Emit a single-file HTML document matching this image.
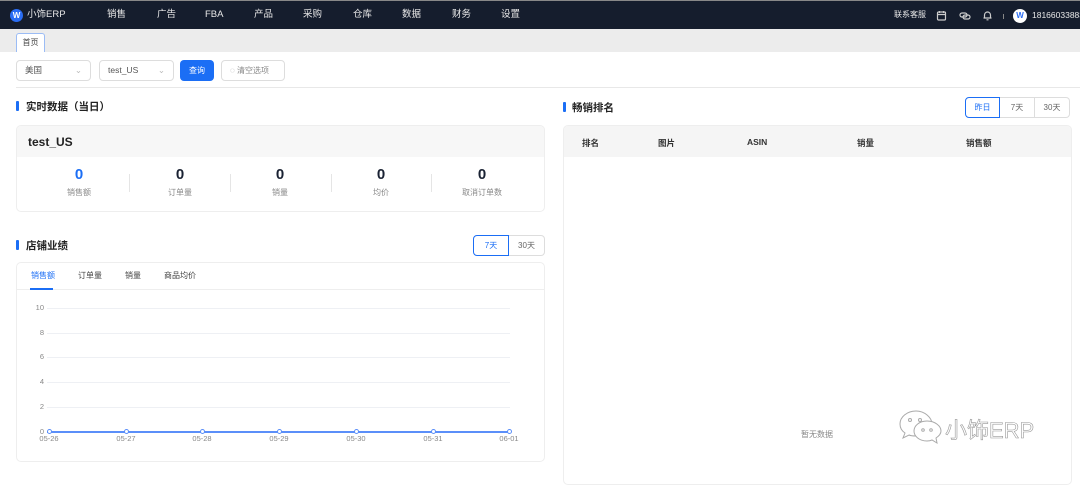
<!DOCTYPE html>
<html><head><meta charset="utf-8"><style>
*{box-sizing:border-box;margin:0;padding:0}
body{width:1080px;height:475px;overflow:hidden;background:#fff;font-family:"Liberation Sans","Noto Sans CJK SC",sans-serif;font-size:9px;color:#333;position:relative}
.abs{position:absolute}
.nav{left:0;top:0;width:1080px;height:29px;background:#151d2d;border-top:1px solid #888}
.nav span{position:absolute;top:0;line-height:28px;color:#e8e8e8;font-size:9.5px}
.tabs{left:0;top:29px;width:1080px;height:23px;background:#ececec}
.sel{border:1px solid #ddd;border-radius:4px;height:21px;top:60px;color:#555;padding:0 8px;line-height:19px;font-size:8.5px}
.title{font-size:10.5px;font-weight:bold;color:#222}
.bar{width:3px;height:10px;background:#1b6ef5;border-radius:1px}
.card{border:1px solid #eee;border-radius:5px}
.stat{position:absolute;top:166px;width:100px;text-align:center}
.stat b{display:block;font-size:15px;color:#1a2233}
.stat i{display:block;font-style:normal;color:#888;font-size:8px;margin-top:4px}
.sep{position:absolute;top:174px;width:1px;height:18px;background:#e5e5e5}
.grid{position:absolute;left:47px;width:463px;height:1px;background:#eef0f4}
.yl{position:absolute;left:30px;width:14px;text-align:right;color:#888;font-size:7.5px}
.xl{position:absolute;top:434px;width:30px;margin-left:-15px;text-align:center;color:#888;font-size:7.5px}
.dot{position:absolute;top:429px;width:5px;height:5px;border-radius:50%;border:1px solid #5b8ff9;background:#fff;margin-left:-2.5px}
.btn{position:absolute;height:21px;border:1px solid #ddd;font-size:8px;color:#666;text-align:center;line-height:19px}
</style></head><body>
<div class="abs nav">
 <div class="abs" style="left:10px;top:8px;width:13px;height:13px;border-radius:50%;background:#2a6df4;color:#fff;font-size:8px;font-weight:bold;text-align:center;line-height:13px">W</div>
 <span style="left:27px">小饰ERP</span>
 <span style="left:107px">销售</span><span style="left:157px">广告</span><span style="left:205px">FBA</span>
 <span style="left:254px">产品</span><span style="left:303px">采购</span><span style="left:353px">仓库</span>
 <span style="left:402px">数据</span><span style="left:452px">财务</span><span style="left:501px">设置</span>
 <span style="left:894px;font-size:8px">联系客服</span>
 <svg class="abs" style="left:936px;top:9px" width="11" height="11" viewBox="0 0 11 11" fill="none" stroke="#ccc" stroke-width="1.2"><rect x="1.5" y="2" width="8" height="8" rx="1"/><path d="M3.5 1v2M7.5 1v2M1.5 4.5h8"/></svg>
 <svg class="abs" style="left:959px;top:9px" width="12" height="11" viewBox="0 0 12 11" fill="none" stroke="#ccc" stroke-width="1.2"><rect x="1" y="3" width="7" height="4" rx="2"/><rect x="4" y="5" width="7" height="4" rx="2"/></svg>
 <svg class="abs" style="left:982px;top:9px" width="11" height="11" viewBox="0 0 11 11" fill="none" stroke="#ccc" stroke-width="1.2"><path d="M2.5 8V5a3 3 0 0 1 6 0v3zM1.5 8h8M4.5 9.8h2"/></svg>
 <div class="abs" style="left:1003px;top:13px;width:1px;height:5px;background:#888"></div>
 <div class="abs" style="left:1013px;top:8px;width:14px;height:14px;border-radius:50%;background:#fff;color:#2a6df4;font-size:8px;font-weight:bold;text-align:center;line-height:14px">W</div>
 <span style="left:1032px;font-size:8.5px">18166033883</span>
</div>
<div class="abs tabs"><div class="abs" style="left:16px;top:4px;width:29px;height:19px;background:#fff;border:1px solid #9bbcf5;border-bottom:none;border-radius:3px 3px 0 0;font-size:8px;text-align:center;line-height:17px;color:#444">首页</div></div>
<div class="abs sel" style="left:16px;width:75px">美国<span style="float:right;color:#bbb">⌄</span></div>
<div class="abs sel" style="left:99px;width:75px">test_US<span style="float:right;color:#bbb">⌄</span></div>
<div class="abs" style="left:180px;top:60px;width:34px;height:21px;background:#1b6ef5;border-radius:4px;color:#fff;font-size:8px;text-align:center;line-height:21px">查询</div>
<div class="abs sel" style="left:221px;width:64px;color:#888;font-size:8px">◌ 清空选项</div>
<div class="abs" style="left:16px;top:87px;width:1064px;height:1px;background:#e8e8e8"></div>

<div class="abs bar" style="left:16px;top:101px"></div>
<div class="abs title" style="left:26px;top:99px">实时数据（当日）</div>
<div class="abs card" style="left:16px;top:125px;width:529px;height:87px;overflow:hidden">
 <div style="height:31px;background:#f7f7f7;font-size:12px;font-weight:bold;color:#222;padding:9px 11px">test_US</div>
</div>
<div class="stat" style="left:29px"><b style="color:#1b6ef5">0</b><i>销售额</i></div>
<div class="stat" style="left:130px"><b>0</b><i>订单量</i></div>
<div class="stat" style="left:230px"><b>0</b><i>销量</i></div>
<div class="stat" style="left:331px"><b>0</b><i>均价</i></div>
<div class="stat" style="left:432px"><b>0</b><i>取消订单数</i></div>
<div class="sep" style="left:129px"></div><div class="sep" style="left:230px"></div><div class="sep" style="left:331px"></div><div class="sep" style="left:431px"></div>

<div class="abs bar" style="left:16px;top:240px"></div>
<div class="abs title" style="left:26px;top:238px">店铺业绩</div>
<div class="btn" style="left:473px;top:235px;width:36px;border-color:#1b6ef5;color:#1b6ef5;border-radius:4px 0 0 4px">7天</div>
<div class="btn" style="left:509px;top:235px;width:36px;border-left:none;border-radius:0 4px 4px 0">30天</div>
<div class="abs card" style="left:16px;top:262px;width:529px;height:200px"></div>
<div class="abs" style="left:17px;top:289px;width:527px;height:1px;background:#eee"></div>
<div class="abs" style="left:31px;top:270px;font-size:8px;color:#1b6ef5">销售额</div>
<div class="abs" style="left:30px;top:288px;width:23px;height:2px;background:#1b6ef5"></div>
<div class="abs" style="left:78px;top:270px;font-size:8px;color:#444">订单量</div>
<div class="abs" style="left:125px;top:270px;font-size:8px;color:#444">销量</div>
<div class="abs" style="left:164px;top:270px;font-size:8px;color:#444">商品均价</div>
<div class="grid" style="top:308px"></div><div class="grid" style="top:333px"></div><div class="grid" style="top:357px"></div><div class="grid" style="top:382px"></div><div class="grid" style="top:407px"></div>
<div class="yl" style="top:303px">10</div><div class="yl" style="top:328px">8</div><div class="yl" style="top:352px">6</div><div class="yl" style="top:377px">4</div><div class="yl" style="top:402px">2</div><div class="yl" style="top:427px">0</div>
<div class="abs" style="left:47px;top:431px;width:463px;height:2px;background:#5b8ff9"></div>
<div class="dot" style="left:49px"></div><div class="dot" style="left:126px"></div><div class="dot" style="left:202px"></div><div class="dot" style="left:279px"></div><div class="dot" style="left:356px"></div><div class="dot" style="left:433px"></div><div class="dot" style="left:509px"></div>
<div class="xl" style="left:49px">05-26</div><div class="xl" style="left:126px">05-27</div><div class="xl" style="left:202px">05-28</div><div class="xl" style="left:279px">05-29</div><div class="xl" style="left:356px">05-30</div><div class="xl" style="left:433px">05-31</div><div class="xl" style="left:509px">06-01</div>

<div class="abs bar" style="left:563px;top:102px"></div>
<div class="abs title" style="left:572px;top:100px">畅销排名</div>
<div class="btn" style="left:965px;top:97px;width:35px;border-color:#1b6ef5;color:#1b6ef5;border-radius:4px 0 0 4px">昨日</div>
<div class="btn" style="left:1000px;top:97px;width:35px;border-left:none">7天</div>
<div class="btn" style="left:1035px;top:97px;width:35px;border-left:none;border-radius:0 4px 4px 0">30天</div>
<div class="abs card" style="left:563px;top:125px;width:509px;height:360px;overflow:hidden">
 <div style="height:31px;background:#f5f5f5;position:relative;font-size:8.5px;font-weight:bold;color:#333">
  <span class="abs" style="left:18px;top:11px">排名</span><span class="abs" style="left:94px;top:11px">图片</span><span class="abs" style="left:183px;top:11px">ASIN</span><span class="abs" style="left:293px;top:11px">销量</span><span class="abs" style="left:402px;top:11px">销售额</span>
 </div>
</div>
<div class="abs" style="left:801px;top:429px;font-size:8px;color:#888">暂无数据</div>
<svg class="abs" style="left:896px;top:408px" width="50" height="38" viewBox="0 0 50 38" fill="#fff" stroke="#aaa" stroke-width="1">
 <path d="M20 3c-9 0-16 6-16 13 0 4 2 7 5 9l-2 5 6-3c2 1 5 1 7 1 9 0 16-6 16-12S29 3 20 3z"/>
 <path d="M31 13c-8 0-13 5-13 10s5 10 13 10c2 0 3 0 5-1l5 3-1-5c3-2 5-4 5-7 0-5-6-10-14-10z"/>
 <circle cx="14" cy="12" r="1.5"/><circle cx="24" cy="12" r="1.5"/><circle cx="27" cy="22" r="1.3"/><circle cx="35" cy="22" r="1.3"/>
</svg>
<div class="abs" style="left:945px;top:413px;font-size:22px;color:#fff;-webkit-text-stroke:0.6px #999">小饰ERP</div>
</body></html>
